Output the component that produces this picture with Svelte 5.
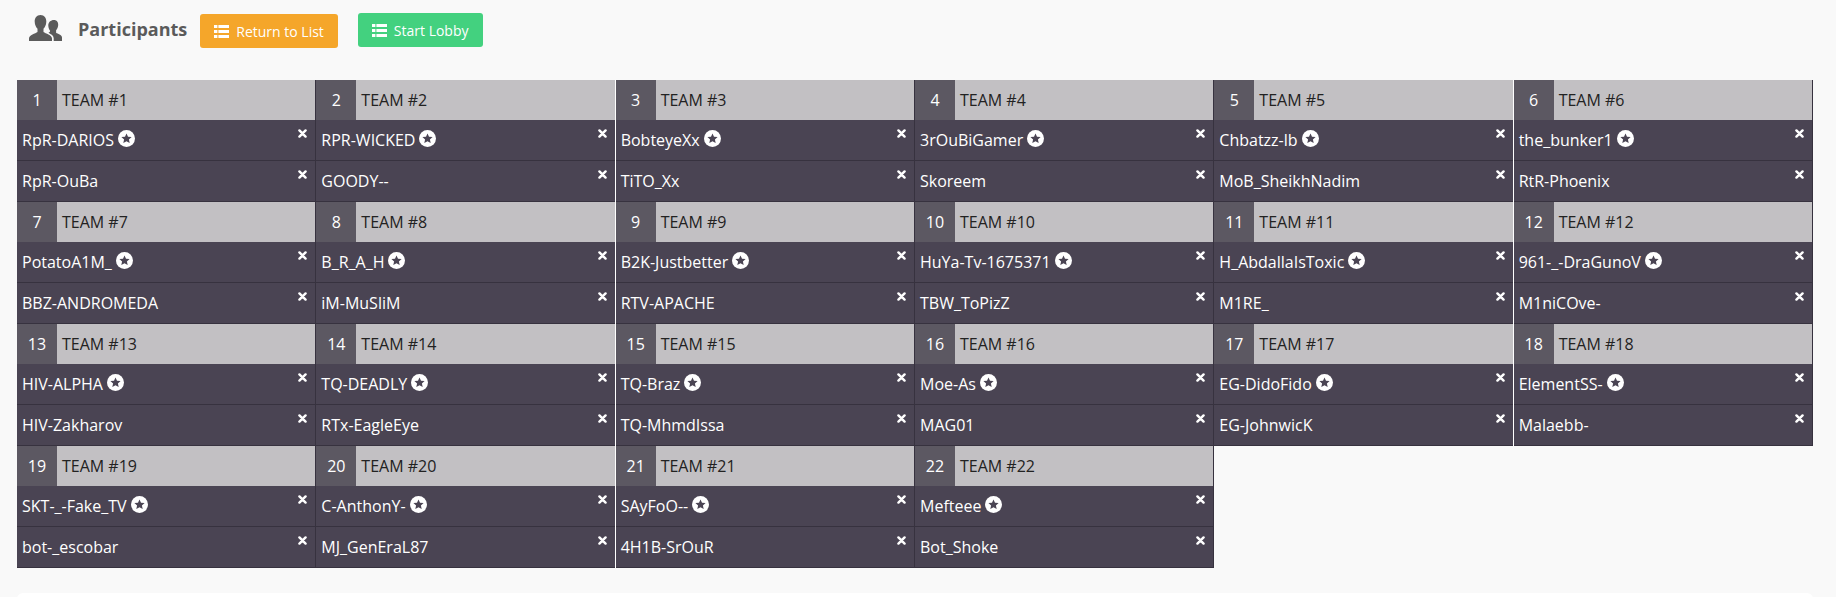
<script lang="ts">
	// [captain, second player] per team, in bracket order
	const teams = [
		['RpR-DARIOS', 'RpR-OuBa'],
		['RPR-WICKED', 'GOODY--'],
		['BobteyeXx', 'TiTO_Xx'],
		['3rOuBiGamer', 'Skoreem'],
		['Chbatzz-lb', 'MoB_SheikhNadim'],
		['the_bunker1', 'RtR-Phoenix'],
		['PotatoA1M_', 'BBZ-ANDROMEDA'],
		['B_R_A_H', 'iM-MuSliM'],
		['B2K-Justbetter', 'RTV-APACHE'],
		['HuYa-Tv-1675371', 'TBW_ToPizZ'],
		['H_AbdallaIsToxic', 'M1RE_'],
		['961-_-DraGunoV', 'M1niCOve-'],
		['HIV-ALPHA', 'HIV-Zakharov'],
		['TQ-DEADLY', 'RTx-EagleEye'],
		['TQ-Braz', 'TQ-MhmdIssa'],
		['Moe-As', 'MAG01'],
		['EG-DidoFido', 'EG-JohnwicK'],
		['ElementSS-', 'Malaebb-'],
		['SKT-_-Fake_TV', 'bot-_escobar'],
		['C-AnthonY-', 'MJ_GenEraL87'],
		['SAyFoO--', '4H1B-SrOuR'],
		['Mefteee', 'Bot_Shoke']
	];
</script>

{#snippet listIcon()}
	<svg class="list-icon" viewBox="0 0 15 13" width="15" height="13" aria-hidden="true">
		<path d="M0 0h3.4v3H0zM4.4 0H15v3H4.4zM0 5h3.4v3H0zM4.4 5H15v3H4.4zM0 10h3.4v3H0zM4.4 10H15v3H4.4z" fill="#fff" />
	</svg>
{/snippet}

{#snippet removeIcon()}
	<svg class="remove" viewBox="0 0 10 10" width="9" height="9" aria-hidden="true">
		<path d="M1.6 1.6l6.8 6.8M8.4 1.6L1.6 8.4" stroke="#fff" stroke-width="2.7" stroke-linecap="round" fill="none" />
	</svg>
{/snippet}

<div class="page">
	<header class="top">
		<svg class="people" viewBox="0 0 33 28" width="33" height="28" aria-hidden="true">
			<path d="M25 6c2.8 0 4.4 2.3 4.2 5-.1 2.2-1 4-2.100 5.200v2.500c1.500 1 5.900 2 5.900 4.800V27h-8.300v-2.800c0-2.600-2.500-4-5.200-5.500 1-.6 1.600-1 1.600-2-1-1.300-1.700-3-1.800-5-.2-3.300 2.300-5.700 5.700-5.700z" fill="#5b5b5b" />
			<path d="M11.500 1c3.800 0 6 3 5.800 6.800-.1 3-1.300 5.400-2.800 7v3.200c2 1.500 8.500 2.800 8.500 6.500V27H0v-2.500c0-3.700 6.500-5 8.500-6.500v-3.200c-1.500-1.600-2.700-4-2.800-7C5.500 4 7.700 1 11.500 1z" fill="#5b5b5b" />
		</svg>
		<h1>Participants</h1>
		<button class="btn orange">{@render listIcon()}Return to List</button>
		<button class="btn green">{@render listIcon()}Start Lobby</button>
	</header>

	<div class="grid">
		{#each teams as players, i}
			<section class="team">
				<div class="team-head">
					<span class="num">{i + 1}</span>
					<span class="name">TEAM #{i + 1}</span>
				</div>
				{#each players as player, p}
					<div class="player">
						<span class="nick">{player}</span>
						{#if p === 0}
							<svg class="star" viewBox="0 0 17 17" width="17" height="17" aria-hidden="true">
								<circle cx="8.500" cy="8.500" r="8.500" fill="#fff" />
								<path d="M8.500 3.400l1.500 3.300 3.600.4-2.700 2.400.8 3.500-3.200-1.800-3.200 1.800.8-3.500-2.700-2.400 3.600-.4z" fill="#4a4453" />
							</svg>
						{/if}
						{@render removeIcon()}
					</div>
				{/each}
			</section>
		{/each}
	</div>

	<div class="card"></div>
</div>

<style>
	:global(body) {
		background: #f9f9f9;
		font-family: 'Open Sans', sans-serif;
	}

	.page {
		height: 597px;
		overflow: hidden;
		padding: 0 23px 0 17px;
		box-sizing: border-box;
	}

	.top {
		display: flex;
		align-items: flex-start;
		height: 80px;
		padding: 14px 0 0 12px;
		box-sizing: border-box;
	}

	.people {
		margin-right: 16px;
	}

	h1 {
		margin: 0 13px 0 0;
		font-size: 18px;
		line-height: 30px;
		font-weight: 700;
		color: #5b5b5b;
	}

	.btn {
		display: flex;
		align-items: center;
		gap: 7px;
		height: 34px;
		padding: 0 14px;
		border: none;
		border-radius: 3px;
		color: #fff;
		font-family: inherit;
		font-size: 14px;
	}

	.orange {
		background: #f5a62a;
		margin-right: 20px;
	}

	.green {
		background: #43d17f;
		margin-top: -1px;
	}

	.grid {
		display: grid;
		grid-template-columns: repeat(6, 1fr);
	}

	.team {
		height: 122px;
		border-right: 1px solid #37323f;
		box-sizing: border-box;
	}

	/* columns 2 and 5 end on a white hairline */
	.team:nth-child(3n + 2) {
		border-right-color: #fff;
	}

	.team-head {
		display: flex;
		align-items: center;
		height: 40px;
		background: #c2c0c3;
		color: #222;
		font-size: 16px;
	}

	.num {
		width: 40px;
		height: 40px;
		line-height: 40px;
		text-align: center;
		background: #5c5862;
		color: #fff;
		margin-right: 5px;
	}

	.player {
		position: relative;
		display: flex;
		align-items: center;
		gap: 4px;
		height: 41px;
		padding-left: 5px;
		box-sizing: border-box;
		background: #4a4453;
		border-bottom: 1px solid #37323f;
		color: #fff;
		font-size: 16px;
	}

	.remove {
		position: absolute;
		top: 9px;
		right: 8px;
	}

	.star {
		margin-top: -3px;
	}

	.card {
		height: 60px;
		margin-top: 25px;
		background: #fff;
		border-radius: 6px;
	}
</style>
